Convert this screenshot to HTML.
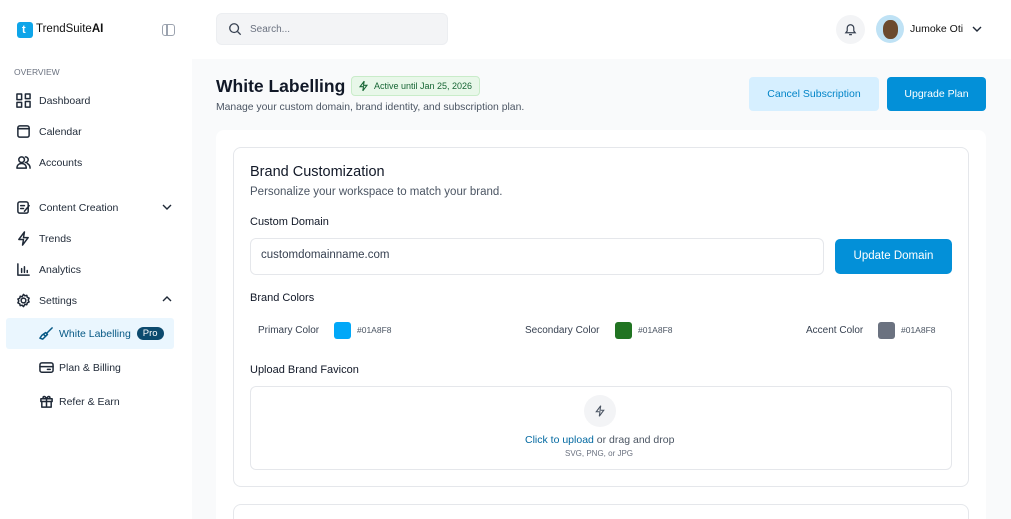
<!DOCTYPE html>
<html style="width:1011px;height:519px;overflow:hidden"><head><style>
*{box-sizing:border-box;margin:0;padding:0}
body{width:1011px;height:519px;overflow:hidden;background:#fff;font-family:"Liberation Sans",sans-serif;color:#111827;position:relative}
.abs{position:absolute}
.side{left:0;top:0;width:192px;height:519px;background:#fff}
.nav{position:absolute;left:16px;font-size:10.5px;color:#1f2937;display:flex;align-items:center;gap:8px}
.nav svg{width:15px;height:15px;fill:none;stroke:#1f2937;stroke-width:1.6;stroke-linecap:round;stroke-linejoin:round}
.main{left:192px;top:59px;width:819px;height:460px;background:#f9fafb}
.t{position:absolute;white-space:nowrap}
</style></head><body>
<div class="abs side">
  <div class="abs" style="left:17px;top:22px;width:16px;height:16px;background:#0ea5e9;border-radius:3px"></div>
  <div class="t" style="left:22px;top:24px;color:#fff;font-weight:bold;font-size:11px">t</div>
  <div class="t" style="left:36px;top:23px;font-size:11.5px;color:#111">TrendSuite<b>AI</b></div>
  <div class="abs" style="left:162px;top:24px;width:13px;height:12px;border:1.5px solid #9ca3af;border-radius:3px"></div>
  <div class="abs" style="left:166px;top:24px;width:1.5px;height:12px;background:#9ca3af"></div>
  <div class="t" style="left:14px;top:67px;font-size:8.5px;color:#6b7280">OVERVIEW</div>
  <div class="nav" style="top:93px"><svg viewBox="0 0 16 16"><rect x="1" y="1" width="5" height="6"/><rect x="1" y="10" width="5" height="5"/><rect x="10" y="1" width="5" height="5"/><rect x="10" y="9" width="5" height="6"/></svg>Dashboard</div>
  <div class="nav" style="top:124px"><svg viewBox="0 0 16 16"><rect x="2" y="2" width="12" height="12" rx="2"/><path d="M2 5h12"/></svg>Calendar</div>
  <div class="nav" style="top:155px"><svg viewBox="0 0 16 16"><circle cx="6" cy="5" r="3"/><path d="M1 14c0-3 2-5 5-5s5 2 5 5zM10 2a3 3 0 010 6M12 9c2 1 3 3 3 5"/></svg>Accounts</div>
  <div class="nav" style="top:200px"><svg viewBox="0 0 16 16"><rect x="2" y="2" width="11" height="12" rx="2"/><path d="M5 6h4M5 9h3M9 12l5-6"/></svg>Content Creation</div>
  <svg class="abs" style="left:161px;top:202px" width="12" height="10" viewBox="0 0 12 10"><path d="M2 3l4 4 4-4" fill="none" stroke="#1f2937" stroke-width="1.4"/></svg>
  <div class="nav" style="top:231px"><svg viewBox="0 0 16 16"><path d="M9 1L3 9h5l-1 6 6-8H8z"/></svg>Trends</div>
  <div class="nav" style="top:262px"><svg viewBox="0 0 16 16"><path d="M2 2v12h12M6 7v4M9 5v6M12 9v2"/></svg>Analytics</div>
  <div class="nav" style="top:293px"><svg viewBox="0 0 16 16"><circle cx="8" cy="8" r="2.5"/><path d="M8 1.5l1.5 1.5 2-.5.5 2 2 1-1 2 1 2-2 1-.5 2-2-.5L8 14.5 6.5 13l-2 .5-.5-2-2-1 1-2-1-2 2-1 .5-2 2 .5z"/></svg>Settings</div>
  <svg class="abs" style="left:161px;top:294px" width="12" height="10" viewBox="0 0 12 10"><path d="M2 7l4-4 4 4" fill="none" stroke="#1f2937" stroke-width="1.4"/></svg>
  <div class="abs" style="left:6px;top:318px;width:168px;height:31px;background:#eaf6fe;border-radius:3px"></div>
  <div class="nav" style="left:39px;top:326px;color:#075985;gap:5px"><svg viewBox="0 0 16 16" style="stroke:#075985"><path d="M14 2L8 8M9 9L4 14 1 13l2-3 4-3zM5 9l2 2"/></svg>White Labelling<span style="background:#0c4a6e;color:#fff;border-radius:8px;padding:1px 6px;font-size:9.5px;margin-left:1px">Pro</span></div>
  <div class="nav" style="left:39px;top:360px;gap:5px"><svg viewBox="0 0 16 16"><rect x="1" y="3" width="14" height="10" rx="2"/><path d="M1 7h14M9 10h3"/></svg>Plan &amp; Billing</div>
  <div class="nav" style="left:39px;top:394px;gap:5px"><svg viewBox="0 0 16 16"><rect x="2" y="5" width="12" height="3"/><path d="M3 8v6h10V8M8 5v9M8 5C6 1 3 3 5 5M8 5c2-4 5-2 3 0"/></svg>Refer &amp; Earn</div>
</div>
<!-- header -->
<div class="abs" style="left:216px;top:13px;width:232px;height:32px;background:#f3f4f6;border:1px solid #eceef1;border-radius:6px"></div>
<svg class="abs" style="left:228px;top:22px" width="14" height="14" viewBox="0 0 16 16"><circle cx="7" cy="7" r="5" fill="none" stroke="#374151" stroke-width="1.5"/><path d="M11 11l3.5 3.5" stroke="#374151" stroke-width="1.5"/></svg>
<div class="t" style="left:250px;top:24px;font-size:10px;color:#6b7280">Search...</div>
<div class="abs" style="left:836px;top:15px;width:29px;height:29px;border-radius:50%;background:#f3f4f6"></div>
<svg class="abs" style="left:843px;top:21px" width="15" height="16" viewBox="0 0 16 16"><path d="M3 12h10l-1.5-2V7a3.5 3.5 0 00-7 0v3zM6.5 14h3" fill="none" stroke="#374151" stroke-width="1.3"/></svg>
<div class="abs" style="left:876px;top:15px;width:28px;height:28px;border-radius:50%;background:#bfe2f5;overflow:hidden"><div style="margin:5px 0 0 7px;width:15px;height:19px;border-radius:45%;background:#6b4a2e"></div></div>
<div class="t" style="left:910px;top:23px;font-size:10.5px;color:#111">Jumoke Oti</div>
<svg class="abs" style="left:971px;top:24px" width="12" height="10" viewBox="0 0 12 10"><path d="M2 3l4 4 4-4" fill="none" stroke="#1f2937" stroke-width="1.4"/></svg>
<div class="abs main"></div>
<div class="t" style="left:216px;top:76px;font-size:17.5px;font-weight:bold;color:#111827">White Labelling</div>
<div class="abs" style="left:351px;top:76px;width:129px;height:20px;background:#e8f7e9;border:1px solid #c9ecc9;border-radius:4px"></div>
<svg class="abs" style="left:358px;top:80px" width="11" height="12" viewBox="0 0 16 16"><path d="M9 1L3 9h5l-1 6 6-8H8z" fill="none" stroke="#166534" stroke-width="1.6"/></svg>
<div class="t" style="left:374px;top:81px;font-size:9px;color:#166534">Active until Jan 25, 2026</div>
<div class="t" style="left:216px;top:102px;font-size:10.4px;color:#4b5563">Manage your custom domain, brand identity, and subscription plan.</div>
<div class="abs" style="left:749px;top:77px;width:130px;height:34px;background:#d6efff;border-radius:4px;color:#0284c7;font-size:10.5px;text-align:center;line-height:34px">Cancel Subscription</div>
<div class="abs" style="left:887px;top:77px;width:99px;height:34px;background:#0390d8;border-radius:4px;color:#fff;font-size:10.5px;text-align:center;line-height:34px">Upgrade Plan</div>
<div class="abs" style="left:216px;top:130px;width:770px;height:389px;background:#fff;border-radius:8px 8px 0 0"></div>
<div class="abs" style="left:233px;top:147px;width:736px;height:340px;border:1px solid #e5e7eb;border-radius:8px;background:#fff"></div>
<div class="abs" style="left:233px;top:504px;width:736px;height:30px;border:1px solid #e5e7eb;border-radius:8px;background:#fff"></div>
<div class="t" style="left:250px;top:164px;font-size:14.5px;color:#111827">Brand Customization</div>
<div class="t" style="left:250px;top:186px;font-size:11.5px;color:#4b5563">Personalize your workspace to match your brand.</div>
<div class="t" style="left:250px;top:216px;font-size:11px;color:#111827">Custom Domain</div>
<div class="abs" style="left:250px;top:238px;width:574px;height:37px;border:1px solid #e5e7eb;border-radius:6px"></div>
<div class="t" style="left:261px;top:249px;font-size:11.5px;color:#374151">customdomainname.com</div>
<div class="abs" style="left:835px;top:239px;width:117px;height:35px;background:#0390d8;border-radius:5px;color:#fff;font-size:11.5px;text-align:center;line-height:35px">Update Domain</div>
<div class="t" style="left:250px;top:292px;font-size:11px;color:#111827">Brand Colors</div>
<div class="t" style="left:258px;top:325px;font-size:10px;color:#374151">Primary Color</div>
<div class="abs" style="left:334px;top:322px;width:17px;height:17px;border-radius:3px;background:#01a8f8"></div>
<div class="t" style="left:357px;top:325px;font-size:8.5px;color:#4b5563">#01A8F8</div>
<div class="t" style="left:525px;top:325px;font-size:10px;color:#374151">Secondary Color</div>
<div class="abs" style="left:615px;top:322px;width:17px;height:17px;border-radius:3px;background:#217422"></div>
<div class="t" style="left:638px;top:325px;font-size:8.5px;color:#4b5563">#01A8F8</div>
<div class="t" style="left:806px;top:325px;font-size:10px;color:#374151">Accent Color</div>
<div class="abs" style="left:878px;top:322px;width:17px;height:17px;border-radius:3px;background:#6b7280"></div>
<div class="t" style="left:901px;top:325px;font-size:8.5px;color:#4b5563">#01A8F8</div>
<div class="t" style="left:250px;top:364px;font-size:11px;color:#111827">Upload Brand Favicon</div>
<div class="abs" style="left:250px;top:386px;width:702px;height:84px;border:1px solid #e5e7eb;border-radius:6px"></div>
<div class="abs" style="left:584px;top:395px;width:32px;height:32px;border-radius:50%;background:#f3f4f6"></div>
<svg class="abs" style="left:594px;top:404px" width="12" height="14" viewBox="0 0 16 16"><path d="M9 1L3 9h5l-1 6 6-8H8z" fill="none" stroke="#4b5563" stroke-width="1.4"/></svg>
<div class="t" style="left:525px;top:434px;font-size:10.5px;color:#4b5563"><span style="color:#0369a1">Click to upload</span> or drag and drop</div>
<div class="t" style="left:565px;top:449px;font-size:8px;color:#6b7280">SVG, PNG, or JPG</div>
</body></html>
